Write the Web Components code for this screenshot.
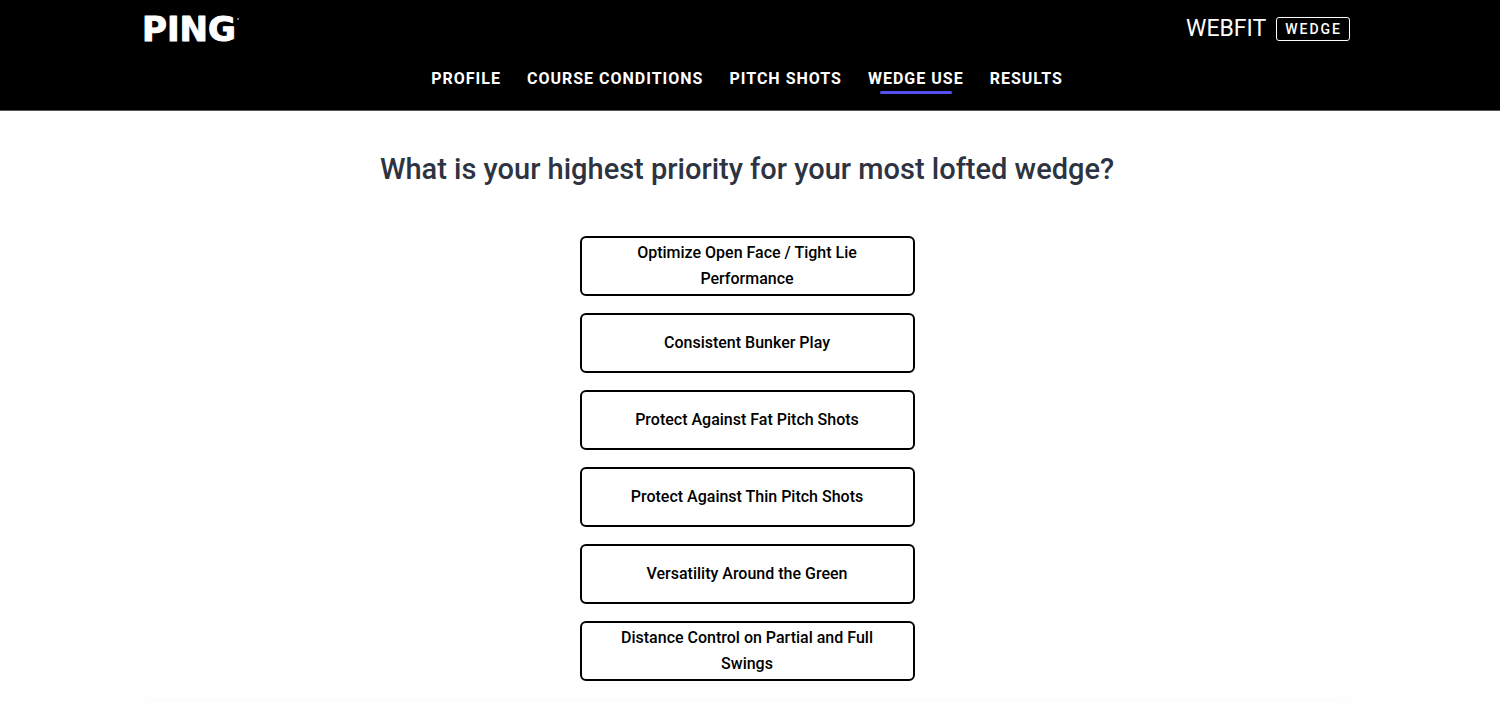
<!DOCTYPE html>
<html lang="en">
<head>
<meta charset="utf-8">
<meta name="viewport" content="width=device-width, initial-scale=1">
<title>WebFit Wedge</title>
<style>
  body {
    margin: 0;
    background: #fff;
    color: #000;
    font-family: Roboto, "Liberation Sans", sans-serif;
    --scroll-gutter: 6px;
    --page-width: 1206px;
  }
</style>
</head>
<body>
<webfit-app></webfit-app>

<script>
class PingLogo extends HTMLElement {
  constructor() {
    super();
    this.attachShadow({ mode: 'open' });
    this.shadowRoot.innerHTML = `
      <style>
        :host {
          display: block;
        }
        a {
          display: block;
        }
        svg {
          display: block;
          width: 96px;
          height: 26px;
          overflow: visible;
        }
        text {
          font: bold 34px "DejaVu Sans", sans-serif;
          fill: #fff;
          stroke: #fff;
          stroke-width: 1;
          stroke-linejoin: round;
        }
      </style>
      <a href="#" aria-label="PING home">
        <svg viewBox="0 0 96 26">
          <text x="-2" y="25">PING</text>
          <circle cx="94" cy="3" r="1" fill="#999"/>
        </svg>
      </a>
    `;
  }
}

class WebfitBadge extends HTMLElement {
  constructor() {
    super();
    this.attachShadow({ mode: 'open' });
    this.shadowRoot.innerHTML = `
      <style>
        :host {
          display: flex;
          align-items: center;
          gap: 10px;
          color: #fff;
        }
        .name {
          font-size: 23px;
          font-weight: 400;
          line-height: 26px;
        }
        .club {
          padding: 0 7px 0 8px;
          border: 1px solid #fff;
          border-radius: 3px;
          font-size: 14px;
          font-weight: 500;
          line-height: 22px;
          letter-spacing: 2px;
        }
      </style>
      <span class="name">WEBFIT</span>
      <span class="club"><slot></slot></span>
    `;
  }
}

class StepLink extends HTMLElement {
  constructor() {
    super();
    this.attachShadow({ mode: 'open' });
    const current = this.hasAttribute('current') ? 'aria-current="step"' : '';
    this.shadowRoot.innerHTML = `
      <style>
        :host {
          display: block;
        }
        a {
          display: flex;
          flex-direction: column;
          align-items: center;
          color: #fff;
          font-size: 16px;
          font-weight: 700;
          line-height: 24px;
          letter-spacing: 1px;
          text-decoration: none;
          text-transform: uppercase;
          white-space: nowrap;
        }
        a::after {
          content: '';
          width: 75%;
          height: 3px;
          border-radius: 2px;
        }
        a[aria-current]::after {
          background: #5551f0;
        }
      </style>
      <a href="#" ${current}><slot></slot></a>
    `;
  }
}

class SiteHeader extends HTMLElement {
  constructor() {
    super();
    this.attachShadow({ mode: 'open' });
    this.shadowRoot.innerHTML = `
      <style>
        :host {
          display: block;
          padding: 16px var(--scroll-gutter) 16px 0;
          background: #000;
          border-bottom: 1px solid #555;
        }
        .bar {
          display: flex;
          align-items: center;
          justify-content: space-between;
          max-width: var(--page-width);
          margin: 0 auto;
        }
        nav {
          display: flex;
          flex-wrap: wrap;
          justify-content: center;
          gap: 0 26px;
          margin-top: 25px;
        }
      </style>
      <header>
        <div class="bar">
          <ping-logo></ping-logo>
          <webfit-badge>WEDGE</webfit-badge>
        </div>
        <nav aria-label="Fitting steps"><slot></slot></nav>
      </header>
    `;
  }
}

class AnswerOption extends HTMLElement {
  constructor() {
    super();
    this.attachShadow({ mode: 'open' });
    this.shadowRoot.innerHTML = `
      <style>
        :host {
          display: block;
        }
        button {
          display: block;
          width: 100%;
          min-height: 60px;
          padding: 0 24px;
          background: #fff;
          border: 2px solid #000;
          border-radius: 6px;
          color: #000;
          font: 500 16px/26px Roboto, "Liberation Sans", sans-serif;
          cursor: pointer;
        }
        button:hover {
          background: #f3f4f6;
        }
      </style>
      <button type="button"><slot></slot></button>
    `;
  }
}

class QuestionPanel extends HTMLElement {
  constructor() {
    super();
    this.attachShadow({ mode: 'open' });
    this.shadowRoot.innerHTML = `
      <style>
        :host {
          display: block;
          padding: 38px var(--scroll-gutter) 20px 0;
        }
        h1 {
          margin: 0 0 47px;
          color: #2d3340;
          font-size: 29px;
          font-weight: 500;
          line-height: 40px;
          text-align: center;
        }
        .answers {
          display: grid;
          gap: 17px;
          max-width: 335px;
          margin: 0 auto;
        }
      </style>
      <main>
        <h1><slot name="question"></slot></h1>
        <div class="answers"><slot></slot></div>
      </main>
    `;
  }
}

class FooterEdge extends HTMLElement {
  constructor() {
    super();
    this.attachShadow({ mode: 'open' });
    this.shadowRoot.innerHTML = `
      <style>
        :host {
          display: block;
          padding-right: var(--scroll-gutter);
        }
        .edge {
          max-width: var(--page-width);
          margin: 0 auto;
          box-shadow: 0 0 12px 4px rgba(0, 0, 0, 0.02);
        }
      </style>
      <div class="edge"></div>
    `;
  }
}

class WebfitApp extends HTMLElement {
  constructor() {
    super();
    this.attachShadow({ mode: 'open' });
    this.shadowRoot.innerHTML = `
      <style>
        :host {
          display: flex;
          flex-direction: column;
          min-height: 100vh;
        }
        question-panel {
          flex: 1;
        }
      </style>
      <site-header>
        <step-link>Profile</step-link>
        <step-link>Course Conditions</step-link>
        <step-link>Pitch Shots</step-link>
        <step-link current>Wedge Use</step-link>
        <step-link>Results</step-link>
      </site-header>
      <question-panel>
        <span slot="question">What is your highest priority for your most lofted wedge?</span>
        <answer-option>Optimize Open Face / Tight Lie Performance</answer-option>
        <answer-option>Consistent Bunker Play</answer-option>
        <answer-option>Protect Against Fat Pitch Shots</answer-option>
        <answer-option>Protect Against Thin Pitch Shots</answer-option>
        <answer-option>Versatility Around the Green</answer-option>
        <answer-option>Distance Control on Partial and Full Swings</answer-option>
      </question-panel>
      <footer-edge></footer-edge>
    `;
  }
}

customElements.define('ping-logo', PingLogo);
customElements.define('webfit-badge', WebfitBadge);
customElements.define('step-link', StepLink);
customElements.define('site-header', SiteHeader);
customElements.define('answer-option', AnswerOption);
customElements.define('question-panel', QuestionPanel);
customElements.define('footer-edge', FooterEdge);
customElements.define('webfit-app', WebfitApp);
</script>
</body>
</html>
